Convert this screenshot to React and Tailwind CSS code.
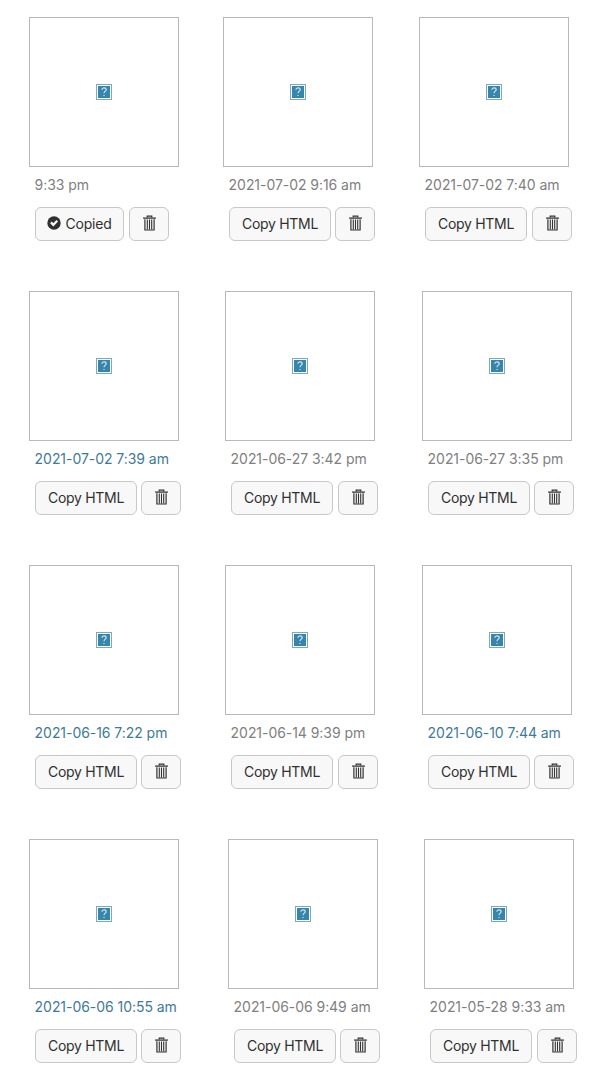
const rows = [
  [
    { date: '9:33 pm', copied: true, w: 'w-[194px]' },
    { date: '2021-07-02 9:16 am', w: 'w-[196px]', gap: 'gap-1' },
    { date: '2021-07-02 7:40 am', w: 'w-[155px]' },
  ],
  [
    { date: '2021-07-02 7:39 am', link: true, w: 'w-[196px]', gap: 'gap-1' },
    { date: '2021-06-27 3:42 pm', w: 'w-[197px]' },
    { date: '2021-06-27 3:35 pm', w: 'w-[155px]', gap: 'gap-1' },
  ],
  [
    { date: '2021-06-16 7:22 pm', link: true, w: 'w-[196px]', gap: 'gap-1' },
    { date: '2021-06-14 9:39 pm', w: 'w-[197px]' },
    { date: '2021-06-10 7:44 am', link: true, w: 'w-[155px]', gap: 'gap-1' },
  ],
  [
    { date: '2021-06-06 10:55 am', link: true, w: 'w-[199px]', gap: 'gap-1' },
    { date: '2021-06-06 9:49 am', w: 'w-[196px]', gap: 'gap-1' },
    { date: '2021-05-28 9:33 am', w: 'w-[155px]' },
  ],
];

function MissingImage() {
  return (
    <svg width="16" height="16" viewBox="0 0 16 16" aria-hidden="true">
      <rect x="0.5" y="0.5" width="15" height="15" fill="#fff" stroke="#77aac4" />
      <rect x="2" y="2" width="12" height="12" fill="#3785ab" />
      <path d="M5.8 5.8C5.9 4.5 6.8 3.8 8 3.8s2.2.7 2.2 1.9C10.2 7.2 8 7.2 8 9.3M8 10.9v1.2" fill="none" stroke="#d5e9f2" strokeWidth="1.15" />
    </svg>
  );
}

function Trash() {
  return (
    <svg width="13" height="16" viewBox="0 0 13 16" fill="none" stroke="#333" aria-hidden="true">
      <path d="M4.2 2.6V1.1h4.6v1.5" strokeWidth="1.2" />
      <path d="M0.1 3.1h12.8" strokeWidth="1.3" />
      <path d="M1.9 4.3V15h9.2V4.3" strokeWidth="1.2" />
      <path d="M4.3 4.6v9.9M6.5 4.6v9.9M8.7 4.6v9.9" strokeWidth="1.1" />
    </svg>
  );
}

function Check() {
  return (
    <svg width="14" height="14" viewBox="0 0 14 14" aria-hidden="true">
      <circle cx="7" cy="7" r="6.7" fill="#303030" />
      <path d="M3.9 6.4L6.3 8.8l4-4" fill="none" stroke="#f7f7f7" strokeWidth="2.3" />
    </svg>
  );
}

function Card({ item }) {
  const button = 'h-[34px] flex shrink-0 items-center justify-center rounded-md border border-[#c8c8c8] bg-[#f8f8f8]';
  return (
    <div className={`shrink-0 ${item.w}`}>
      <div className="flex size-[150px] items-center justify-center border border-[#b9b9b9]">
        <MissingImage />
      </div>
      <div className="pl-1.5">
        <div className={`mt-2 -ml-[0.4px] h-5 whitespace-nowrap leading-5 tracking-[-0.05px] ${item.link ? 'text-[#3e7a9a]' : 'text-[#808080]'}`}>{item.date}</div>
        <div className={`mt-3 flex ${item.gap || 'gap-[5px]'}`}>
          <button className={`${button} text-[#303030] ${item.copied ? 'w-[89px] gap-1 tracking-[-0.2px]' : 'w-[102px] tracking-[-0.3px]'}`}>
            {item.copied && <span className="-mt-0.5"><Check /></span>}
            {item.copied ? 'Copied' : 'Copy HTML'}
          </button>
          <button className={`${button} w-10`} aria-label="Delete">
            <span className="-mt-0.5"><Trash /></span>
          </button>
        </div>
      </div>
    </div>
  );
}

export default function App() {
  return (
    <main className="flex h-[1087px] w-[607px] flex-col gap-[50px] overflow-hidden bg-white pt-[17px] pl-[29px] font-['Inter',sans-serif] text-sm">
      {rows.map((row, r) => (
        <section key={r} className="flex h-56 shrink-0">
          {row.map((item) => <Card key={item.date} item={item} />)}
        </section>
      ))}
    </main>
  );
}
